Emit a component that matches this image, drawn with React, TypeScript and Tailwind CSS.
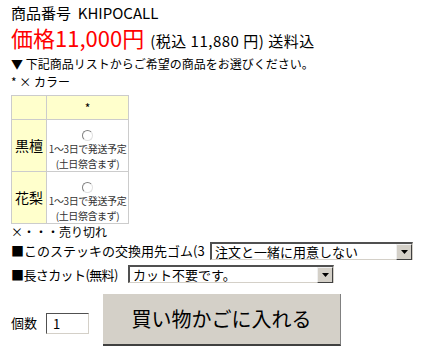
const jp = { fontFamily: '"Noto Sans CJK JP", "Liberation Sans", sans-serif' };

function Select({ width, value }: { width: string; value: string }) {
  return (
    <div className={`flex h-[18px] ${width} shrink-0 border-t-2 border-l-2 border-t-[#505050] border-l-[#505050] border-b border-r border-b-[#d4d0c8] border-r-[#d4d0c8] bg-white`}>
      <div className="flex-1 whitespace-nowrap pl-[3px] text-[13px] leading-[16px] text-black">{value}</div>
      <div className="flex h-[16px] w-[16px] items-center justify-center border border-t-[#f0f0f0] border-l-[#f0f0f0] border-b-[#404040] border-r-[#404040] bg-[#d4d0c8]">
        <svg width="7" height="4" viewBox="0 0 7 4">
          <path d="M0 0h7L3.5 4z" fill="#000" />
        </svg>
      </div>
    </div>
  );
}

function Radio() {
  return (
    <div className="mx-auto h-[11px] w-[11px] rounded-full border border-t-[#808080] border-l-[#808080] border-b-[#e0e0e0] border-r-[#e0e0e0] bg-white" />
  );
}

const items = [
  { name: "黒檀" },
  { name: "花梨" },
];

export default function App() {
  return (
    <div className="h-[355px] w-[438px] overflow-hidden bg-white pl-[11px] text-black" style={jp}>
      <div className="pt-[4px] text-[15px] leading-[18px]">
        商品番号&nbsp; KHIPOCALL
      </div>
      <div className="mt-[2px] flex items-baseline leading-[26px]">
        <span className="text-[22px] text-[#ff0000]">価格11,000円</span>
        <span className="ml-[6px] text-[15px] tracking-[0.5px]">(税込 11,880 円) 送料込</span>
      </div>
      <div className="text-[12px] leading-[19px]">▼ 下記商品リストからご希望の商品をお選びください。</div>
      <div className="text-[12px] leading-[17px]">* × カラー</div>
      <table className="mt-[5px] w-[117px] table-fixed border-collapse text-center">
        <tbody>
          <tr className="h-[24px]">
            <td className="w-[35px] border border-[#cccccc] bg-[#ffffcc]"></td>
            <td className="w-[82px] border border-[#cccccc] bg-[#ffffcc] text-[12px]">*</td>
          </tr>
          {items.map((item) => (
            <tr key={item.name} className="h-[51px]">
              <td className="border border-[#cccccc] bg-[#ffffcc] text-[14px]">{item.name}</td>
              <td className="border border-[#cccccc] p-0 pt-[10px] align-top">
                <Radio />
                <div className="whitespace-nowrap text-[10px] leading-[15px] tracking-[-0.4px] text-[#333]">
                  <div>1～3日で発送予定</div>
                  <div>(土日祭含まず)</div>
                </div>
              </td>
            </tr>
          ))}
        </tbody>
      </table>
      <div className="text-[12px] leading-[15px]">×・・・売り切れ</div>
      <div className="mt-[2px] flex items-center text-[13px]">
        <span className="w-[199px] whitespace-nowrap">■このステッキの交換用先ゴム(3</span>
        <Select width="w-[203px]" value="注文と一緒に用意しない" />
      </div>
      <div className="mt-[4px] flex items-center text-[13px]">
        <span className="w-[117px] whitespace-nowrap tracking-[-0.6px]">■長さカット(無料)</span>
        <Select width="w-[206px]" value="カット不要です。" />
      </div>
      <div className="mt-[10px] flex items-center">
        <div className="mt-[6px] flex items-center">
          <span className="text-[13px]">個数</span>
          <input
            defaultValue="1"
            className="ml-[9px] h-[21px] w-[43px] border border-t-[#505050] border-l-[#505050] border-b-[#d4d0c8] border-r-[#d4d0c8] pl-[6px] text-[13px] outline-none"
          />
        </div>
        <button className="ml-[14px] h-[52px] w-[238px] border-b-2 border-r border-b-[#404040] border-r-[#808080] bg-[#d4d0c8] text-[20px] text-black">
          買い物かごに入れる
        </button>
      </div>
    </div>
  );
}
